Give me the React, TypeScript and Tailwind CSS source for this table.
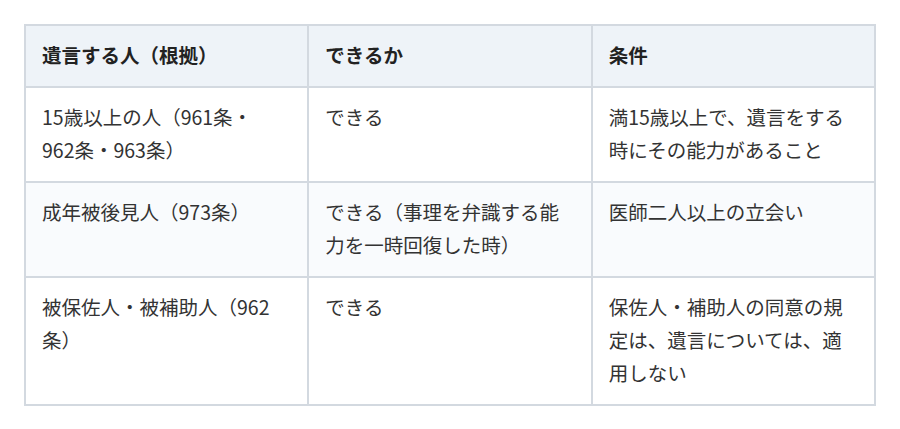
import React from "react";

const rows: React.ReactNode[][] = [
  [
    <>15歳以上の人（961条・<br />962条・963条）</>,
    "できる",
    <>満15歳以上で、遺言をする<br />時にその能力があること</>,
  ],
  [
    "成年被後見人（973条）",
    <>できる（事理を弁識する能<br />力を一時回復した時）</>,
    "医師二人以上の立会い",
  ],
  [
    <>被保佐人・被補助人（962<br />条）</>,
    "できる",
    <>保佐人・補助人の同意の規<br />定は、遺言については、適<br />用しない</>,
  ],
];

export default function App() {
  return (
    <div
      className="w-[900px] h-[429px] bg-white pt-[24px] pl-[24px]"
      style={{ fontFamily: '"Noto Sans CJK JP", "Noto Sans", sans-serif' }}
    >
      <table className="w-[852px] table-fixed border-collapse text-[19.5px] leading-[33px] text-[#333333]">
        <thead>
          <tr className="bg-[#eef3f8]">
            {["遺言する人（根拠）", "できるか", "条件"].map((h) => (
              <th
                key={h}
                className="border-2 border-[#d3d9e0] px-[16px] pt-[12px] pb-[15px] text-left align-top font-bold text-[#222222]"
              >
                {h}
              </th>
            ))}
          </tr>
        </thead>
        <tbody>
          {rows.map((r, i) => (
            <tr key={i} className={i === 1 ? "bg-[#f9fbfd]" : "bg-white"}>
              {r.map((c, j) => (
                <td
                  key={j}
                  className="border-2 border-[#d3d9e0] px-[16px] pt-[12px] pb-[15px] align-top whitespace-nowrap"
                >
                  {c}
                </td>
              ))}
            </tr>
          ))}
        </tbody>
      </table>
    </div>
  );
}
